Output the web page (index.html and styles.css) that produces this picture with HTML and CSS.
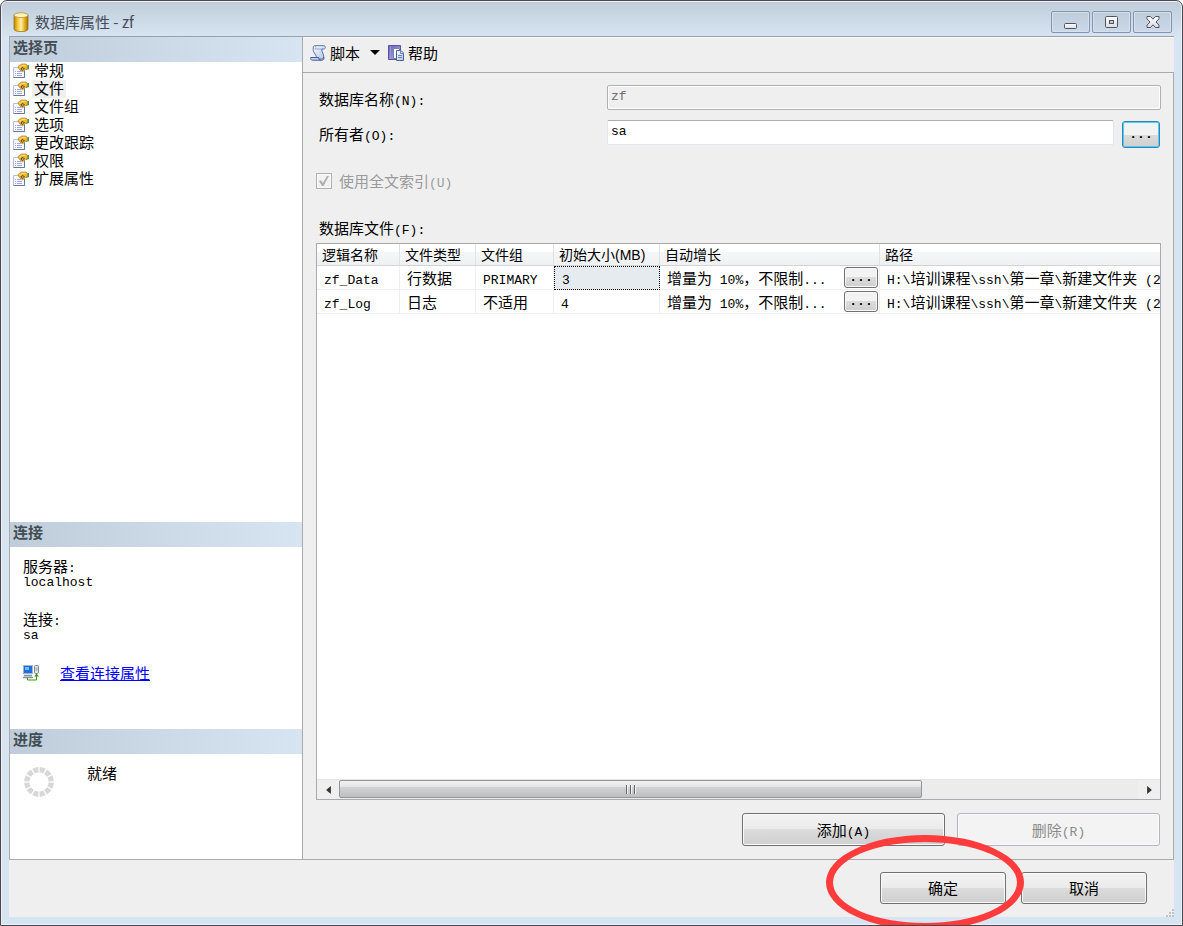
FILE: index.html
```html
<!DOCTYPE html>
<html lang="zh-CN">
<head>
<meta charset="utf-8">
<title>数据库属性 - zf</title>
<link rel="stylesheet" href="styles.css">
</head>
<body>
<svg class="defs" aria-hidden="true">
  <defs>
    <linearGradient id="gold" x1="0" x2="1" y1="0" y2="0"><stop offset="0" stop-color="#b98205"/><stop offset=".2" stop-color="#f0b825"/><stop offset=".5" stop-color="#fff3a8"/><stop offset=".75" stop-color="#eab01c"/><stop offset="1" stop-color="#a87404"/></linearGradient>
    <linearGradient id="paper" x1="0" x2="1" y1="0" y2="1"><stop offset="0" stop-color="#fff"/><stop offset="1" stop-color="#a9c0e6"/></linearGradient>
    <linearGradient id="book" x1="0" x2="1" y1="0" y2="1"><stop offset="0" stop-color="#6660b8"/><stop offset="1" stop-color="#b4b2e6"/></linearGradient>
    <linearGradient id="glyph" x1="0" x2="0" y1="0" y2="1"><stop offset="0" stop-color="#fff"/><stop offset="1" stop-color="#dcdcdc"/></linearGradient>
    <symbol id="page" viewBox="0 0 16 16">
      <path d="M.5 4.500h11v10H.5z" fill="#f7f9ff" stroke="#b4bedb"/>
      <path d="M.5 14.500h11v-7" fill="none" stroke="#66769c"/>
      <path d="M2 8.500h1M4 8.500h4M2 10.500h1M4 10.500h5M2 12.500h1M4 12.500h5" stroke="#a0a6e2"/>
      <path d="M13 2h3v4l-3 1z" fill="#3f9a3f"/>
      <path d="M5 3.500L8.500 1H13l1.500 1.500v3L12 6.500 9.500 9 7 7 5.500 5z" fill="#f2b830" stroke="#b98420" stroke-width=".7"/>
      <path d="M8.500 2.500h4M6.500 4h2" stroke="#ffe68a"/>
      <path d="M8 5l1.500-1L12 5.500 9.500 8 7.500 6z" fill="#6a4a14"/>
      <path d="M9 6h1.500" stroke="#fff0a0"/>
    </symbol>
  </defs>
</svg>
<div class="window">
  <header class="titlebar">
    <svg class="db-icon" viewBox="0 0 16 20" aria-hidden="true">
      <path d="M1 3v14c0 3.500 14 3.500 14 0V3z" fill="url(#gold)" stroke="#9a741c" stroke-width=".8"/>
      <ellipse cx="8" cy="3.200" rx="7" ry="2.400" fill="#fdf3bd" stroke="#b8922e" stroke-width=".8"/>
    </svg>
    <h1 class="title">数据库属性 - zf</h1>
    <div class="caption-buttons">
      <button class="caption" type="button" aria-label="最小化"><svg viewBox="0 0 16 14"><rect x="1.500" y="8.500" width="12" height="5" rx="1" fill="url(#glyph)" stroke="#4d5468"/></svg></button>
      <button class="caption" type="button" aria-label="最大化"><svg viewBox="0 0 16 14"><rect x="1.500" y="1.500" width="12" height="11" rx="1" fill="url(#glyph)" stroke="#4d5468"/><rect x="5.500" y="5.500" width="4" height="3" fill="#b8c8dc" stroke="#4d5468"/></svg></button>
      <button class="caption" type="button" aria-label="关闭"><svg viewBox="0 0 16 14"><path d="M2 1.500h3.500L8 4.200l2.500-2.700H14v2.300L11 7l3 3.200v2.300h-3.500L8 9.800l-2.500 2.700H2v-2.300L5 7 2 3.800z" fill="url(#glyph)" stroke="#4d5468" stroke-linejoin="round"/></svg></button>
    </div>
  </header>

  <div class="client">
    <div class="body">
      <aside class="sidebar">
        <section class="pages">
          <h2 class="panel-title">选择页</h2>
          <ul class="page-list">
            <li class="page-item"><svg class="icon" aria-hidden="true"><use href="#page"/></svg><span class="page-name">常规</span></li>
            <li class="page-item"><svg class="icon" aria-hidden="true"><use href="#page"/></svg><span class="page-name selected">文件</span></li>
            <li class="page-item"><svg class="icon" aria-hidden="true"><use href="#page"/></svg><span class="page-name">文件组</span></li>
            <li class="page-item"><svg class="icon" aria-hidden="true"><use href="#page"/></svg><span class="page-name">选项</span></li>
            <li class="page-item"><svg class="icon" aria-hidden="true"><use href="#page"/></svg><span class="page-name">更改跟踪</span></li>
            <li class="page-item"><svg class="icon" aria-hidden="true"><use href="#page"/></svg><span class="page-name">权限</span></li>
            <li class="page-item"><svg class="icon" aria-hidden="true"><use href="#page"/></svg><span class="page-name">扩展属性</span></li>
          </ul>
        </section>
        <section class="connection">
          <h2 class="panel-title">连接</h2>
          <dl class="facts">
            <dt>服务器<span class="lat">:</span></dt>
            <dd class="lat">localhost</dd>
            <dt>连接<span class="lat">:</span></dt>
            <dd class="lat">sa</dd>
          </dl>
          <div class="view-link">
            <svg class="icon" viewBox="0 0 16 16" aria-hidden="true">
              <rect x=".5" y=".5" width="9" height="8" fill="#1c6fe0" stroke="#a8b4c4"/>
              <path d="M2 2h4v3H2z" fill="#7ab8ff"/>
              <path d="M1 10.500h8M0 12.500h10" stroke="#8290a4" stroke-width="1.500"/>
              <rect x="11.500" y=".5" width="4" height="8" rx="1" fill="#e2e6ec" stroke="#7a8494"/>
              <path d="M12.500 3h2M12.500 5h2" stroke="#8a94a4"/>
              <path d="M4.500 13v2h9v-5" fill="none" stroke="#3c9a10"/>
              <path d="M11 11.500L13.500 8.500 16 11.500z" fill="#3c9a10"/>
            </svg>
            <a class="link" href="#">查看连接属性</a>
          </div>
        </section>
        <section class="progress">
          <h2 class="panel-title">进度</h2>
          <div class="status">
            <svg class="spinner" viewBox="0 0 30 30" aria-hidden="true"><circle cx="15" cy="15" r="12.200" fill="none" stroke="#d8d8d8" stroke-width="5.400" pathLength="120" stroke-dasharray="8 2" stroke-dashoffset="-1"/></svg>
            <span>就绪</span>
          </div>
        </section>
      </aside>

      <main class="content">
        <div class="toolbar">
          <button class="tool" type="button">
            <svg class="icon" viewBox="0 0 16 16" aria-hidden="true">
              <path d="M4.500.7h9.300c2 0 2 3.300 0 3.300h-2c-.5 3 2.200 5 2 8l-1 2H6c1.500-4-3-6-2.800-9.500C3.200 2 3.300 1 4.500.7z" fill="url(#paper)" stroke="#5870a4"/>
              <path d="M4.500.7c1.800.4 1.800 3 .3 3.300h7" fill="none" stroke="#93a8d0"/>
              <path d="M.8 12.500h8c-.5 1.800 1 2.800 2.500 2.700H2.500C.8 15.200.3 13.700.8 12.500z" fill="#c3d3f0" stroke="#445c94"/>
              <path d="M11.300 15.200c2.300 0 3.200-1 2.500-3.200" fill="none" stroke="#445c94"/>
            </svg>
            脚本
            <svg class="caret" viewBox="0 0 10 5" aria-hidden="true"><path d="M0 0h10L5 5z"/></svg>
          </button>
          <button class="tool" type="button">
            <svg class="icon" viewBox="0 0 16 16" aria-hidden="true">
              <path d="M.5.500h12v14H.5z" fill="url(#book)" stroke="#5652a0"/>
              <path d="M2.500 1v13" stroke="#9a98d8"/>
              <path d="M5.500 3.500h5l2 2v8h-7z" fill="#fff" stroke="#7482b0"/>
              <path d="M8.500 5.500h4.500l2.500 2.500v7.500h-7z" fill="url(#paper)" stroke="#48629a"/>
              <path d="M12.500 5.500V8.500h3M10 10.500h4M10 12.500h4" fill="none" stroke="#6a86bc"/>
            </svg>
            帮助
          </button>
        </div>

        <div class="sheet">
          <div class="field">
            <label for="dbname">数据库名称<span class="lat">(N):</span></label>
            <input class="text lat" id="dbname" type="text" value="zf" disabled>
          </div>
          <div class="field">
            <label for="owner">所有者<span class="lat">(O):</span></label>
            <input class="text lat" id="owner" type="text" value="sa">
            <button class="browse focused lat" type="button" aria-label="浏览所有者">...</button>
          </div>
          <div class="check">
            <input class="box" id="fulltext" type="checkbox" checked disabled>
            <label for="fulltext">使用全文索引<span class="lat">(U)</span></label>
          </div>
          <h3 class="grid-label">数据库文件<span class="lat">(F):</span></h3>

          <div class="grid">
            <div class="grid-view">
              <table class="files">
                <colgroup><col class="c-name"><col class="c-type"><col class="c-group"><col class="c-size"><col class="c-growth"><col></colgroup>
                <thead>
                  <tr><th>逻辑名称</th><th>文件类型</th><th>文件组</th><th>初始大小(MB)</th><th>自动增长</th><th>路径</th></tr>
                </thead>
                <tbody>
                  <tr>
                    <td><span class="lat">zf_Data</span></td><td>行数据</td><td><span class="lat">PRIMARY</span></td><td class="current"><span class="lat">3</span></td>
                    <td><div class="growth"><span>增量为<span class="lat"> 10%</span>，不限制<span class="lat">...</span></span><button class="browse lat" type="button" aria-label="更改 zf_Data 的自动增长">...</button></div></td>
                    <td><span class="lat">H:\</span>培训课程<span class="lat">\ssh\</span>第一章<span class="lat">\</span>新建文件夹<span class="lat"> (2</span></td>
                  </tr>
                  <tr>
                    <td><span class="lat">zf_Log</span></td><td>日志</td><td>不适用</td><td><span class="lat">4</span></td>
                    <td><div class="growth"><span>增量为<span class="lat"> 10%</span>，不限制<span class="lat">...</span></span><button class="browse lat" type="button" aria-label="更改 zf_Log 的自动增长">...</button></div></td>
                    <td><span class="lat">H:\</span>培训课程<span class="lat">\ssh\</span>第一章<span class="lat">\</span>新建文件夹<span class="lat"> (2</span></td>
                  </tr>
                </tbody>
              </table>
            </div>
            <div class="scrollbar">
              <button class="arrow" type="button" aria-label="向左滚动"><svg viewBox="0 0 6 10"><path d="M6 0v10L0 5z"/></svg></button>
              <div class="track"><div class="thumb"><svg class="grip" viewBox="0 0 11 9" aria-hidden="true"><path d="M1.500 0v9M5.500 0v9M9.500 0v9" stroke="#666"/><path d="M2.500 0v9M6.500 0v9M10.500 0v9" stroke="#f4f4f4"/></svg></div></div>
              <button class="arrow" type="button" aria-label="向右滚动"><svg viewBox="0 0 6 10"><path d="M0 0v10l6-5z"/></svg></button>
            </div>
          </div>

          <div class="grid-actions">
            <button class="push wide" type="button">添加<span class="lat">(A)</span></button>
            <button class="push wide" type="button" disabled>删除<span class="lat">(R)</span></button>
          </div>
        </div>
      </main>
    </div>

    <footer class="footer">
      <div class="marked">
        <button class="push" type="button">确定</button>
        <span class="ring"></span>
      </div>
      <button class="push" type="button">取消</button>
      <svg class="resize" viewBox="0 0 8 8" aria-hidden="true"><path d="M6 0h2v2H6zM3 3h2v2H3zM6 3h2v2H6zM0 6h2v2H0zM3 6h2v2H3zM6 6h2v2H6z" fill="#c0c4c8"/></svg>
    </footer>
  </div>
</div>
</body>
</html>
```

FILE: styles.css
```css
* { box-sizing: border-box; }

body {
  margin: 0;
  background: #fff;
  color: #000;
  font: 15px/18px "Noto Sans CJK SC", sans-serif;
}

button, input { font: inherit; color: inherit; }
h1, h2, h3, ul, dl, dd { margin: 0; padding: 0; }
h1, h2, h3 { font-size: 15px; font-weight: 400; }

.defs { position: absolute; width: 0; height: 0; }

.lat {
  font-family: "Liberation Mono", "Noto Sans CJK SC", monospace;
  font-size: 13px;
  line-height: 1;
  white-space: pre;
}

.icon { width: 16px; height: 16px; flex: none; }

.window {
  display: flex;
  flex-direction: column;
  min-height: 100vh;
  padding: 0 8px;
  border: 1px solid #4a4a4e;
  border-bottom-width: 1px;
  border-radius: 7px 7px 0 0;
  background: linear-gradient(#bfccda, #d7e4f2 36px);
  box-shadow: inset 0 0 0 1px #eaf1f8;
  overflow: hidden;
}

.titlebar {
  display: flex;
  align-items: center;
  gap: 6px;
  height: 35px;
  padding: 7px 2px 0 4px;
}
.db-icon { width: 16px; height: 20px; }
.title { flex: 1; color: #444c56; }
.caption-buttons { display: flex; gap: 2px; }
.caption {
  display: grid;
  place-items: center;
  width: 39px;
  height: 22px;
  padding: 0;
  border: 1px solid #8494b0;
  border-radius: 2px;
  background: linear-gradient(#bdcbdb, #ccd9e8);
  box-shadow: inset 0 0 0 1px #d5e0ec;
}
.caption svg { width: 16px; height: 14px; }

.client {
  flex: 1;
  display: flex;
  flex-direction: column;
  margin-bottom: 8px;
  border-top: 1px solid #9c9fa4;
  background: #efefef;
}
.body {
  flex: 1;
  display: flex;
  border-bottom: 1px solid #a9a9b0;
}

.sidebar {
  display: flex;
  flex-direction: column;
  width: 294px;
  flex: none;
  border: solid #a9a9b0;
  border-width: 0 1px;
  background: #fff;
}
.panel-title {
  height: 25px;
  padding: 1px 3px;
  background: linear-gradient(90deg, #bfccda, #d7e4f2);
  color: #434e54;
  font-weight: 700;
}
.pages { flex: 1; }
.connection { height: 207px; }
.progress { height: 130px; }
.page-list { list-style: none; }
.page-item {
  display: flex;
  align-items: center;
  gap: 3px;
  height: 18px;
  padding-left: 3px;
}
.page-name {
  padding: 0 2px 2px;
  line-height: 16px;
}
.selected { background: #efefef; }
.facts { padding: 11px 13px 0; line-height: 16px; }
.facts dd { margin-bottom: 20px; line-height: 16px; }
.view-link {
  display: flex;
  align-items: center;
  gap: 21px;
  padding: 0 13px;
}
.link { color: #00f; }
.status {
  display: flex;
  gap: 33px;
  padding: 10px 14px;
}
.spinner { width: 30px; height: 30px; margin-top: 3px; }

.content {
  flex: 1;
  min-width: 0;
  display: flex;
  flex-direction: column;
}
.toolbar {
  display: flex;
  align-items: center;
  gap: 8px;
  height: 36px;
  padding: 0 7px 5px;
  border-top: 1px solid #fafafa;
  border-bottom: 1px solid #a9a9b0;
}
.tool {
  display: flex;
  align-items: center;
  gap: 4px;
  padding: 0;
  border: 0;
  background: none;
}
.caret { width: 10px; height: 5px; margin-left: 6px; }

.sheet {
  flex: 1;
  display: flex;
  flex-direction: column;
  padding: 12px 12px 13px 13px;
  border-right: 1px solid #a9a9b0;
}
.field {
  display: flex;
  align-items: flex-start;
  height: 25px;
  margin-bottom: 10px;
}
.field label { width: 291px; padding: 5px 3px; flex: none; }
.text {
  flex: 1;
  min-width: 0;
  height: 25px;
  padding: 0 3px 2px;
  border: 1px solid #e2e6ee;
  border-top-color: #abadb3;
  border-radius: 2px;
  background: #fff;
}
.text:disabled {
  border-color: #afafaf;
  background: #efefef;
  box-shadow: inset 0 0 0 1px #fff;
  color: #6d6d6d;
}
.browse {
  width: 34px;
  height: 21px;
  flex: none;
  padding: 0;
  border: 1px solid #707070;
  border-radius: 3px;
  background: linear-gradient(#f2f2f2 0 50%, #dcdcdc 50%, #cfcfcf);
  box-shadow: inset 0 0 0 1px #fafafa;
  font-weight: 700;
}
.browse.focused {
  width: 38px;
  height: 27px;
  margin: 1px 1px 0 8px;
  border-color: #3c7fb1;
  box-shadow: inset 0 0 0 1px #48d0f8;
}

.check {
  display: flex;
  align-items: center;
  gap: 7px;
  height: 18px;
  margin-top: 17px;
  color: #9b9b9b;
}
.box {
  appearance: none;
  display: grid;
  place-items: center;
  width: 16px;
  height: 16px;
  margin: 0;
  border: 1px solid #b1b1b1;
  background: #f2f2f2;
  box-shadow: inset 0 0 0 1px #fafafa;
}
.box:checked::before {
  content: "";
  width: 10px;
  height: 10px;
  background: #b0b0b0;
  clip-path: polygon(0 50%, 20% 42%, 38% 70%, 80% 0, 100% 0, 45% 100%, 30% 100%);
}
.grid-label { margin-top: 29px; padding: 0 3px; height: 24px; }

.grid {
  flex: 1;
  display: flex;
  flex-direction: column;
  border: 1px solid #a9a9b0;
  background: #fff;
}
.grid-view { flex: 1; overflow: hidden; }
.files {
  width: 100%;
  table-layout: fixed;
  border-collapse: separate;
  border-spacing: 0;
}
.c-name { width: 83px; }
.c-type { width: 76px; }
.c-group { width: 78px; }
.c-size { width: 106px; }
.c-growth { width: 220px; }
.files th, .files td {
  overflow: hidden;
  padding: 0 7px;
  text-align: left;
  white-space: nowrap;
}
.files th {
  height: 22px;
  padding: 0 5px;
  border-right: 1px solid #e0e2e4;
  border-bottom: 1px solid #d0d2d5;
  background: linear-gradient(#fff 0 40%, #f5f6f8 40%, #f0f1f3);
  font: 14px/20px "Liberation Sans", "Noto Sans CJK SC", sans-serif;
}
.files td {
  height: 24px;
  border-right: 1px solid #efefef;
  border-bottom: 1px solid #efefef;
}
.files th:last-child, .files td:last-child { border-right: 0; }
.files .current {
  border: 1px dotted #000;
  background: #e6ebf0;
}
.growth {
  display: flex;
  align-items: center;
  justify-content: space-between;
  margin-right: -6px;
}

.scrollbar {
  display: flex;
  height: 20px;
  border-top: 1px solid #e4e4e4;
  background: #ececec;
}
.arrow {
  display: grid;
  place-items: center;
  width: 22px;
  padding: 0;
  border: 0;
  background: #efefef;
}
.arrow svg { width: 5px; height: 8px; fill: #333; }
.track { flex: 1; padding-bottom: 1px; }
.thumb {
  display: grid;
  place-items: center;
  width: 73%;
  height: 100%;
  border: 1px solid #959595;
  border-radius: 2px;
  background: linear-gradient(#f2f2f2, #e4e4e6 38%, #d2d3d5 38%, #bdbec0);
}
.grip { width: 11px; height: 9px; }

.grid-actions {
  display: flex;
  justify-content: flex-end;
  gap: 12px;
  margin-top: 13px;
  padding-right: 1px;
}
.push {
  width: 126px;
  height: 32px;
  padding: 0;
  border: 1px solid #707070;
  border-radius: 3px;
  background: linear-gradient(#f3f3f3, #ebebeb 50%, #dcdcdc 50%, #cfcfcf);
  box-shadow: inset 0 0 0 1px #fafafa;
}
.push.wide { width: 203px; height: 33px; }
.push:disabled {
  border-color: #b4b8bc;
  background: #f3f3f3;
  color: #8b8b8b;
}

.footer {
  position: relative;
  display: flex;
  justify-content: flex-end;
  gap: 15px;
  height: 57px;
  padding: 12px 27px 0;
}
.marked { position: relative; }
.ring {
  position: absolute;
  left: -54px;
  top: -37px;
  width: 198px;
  height: 95px;
  border: 7px solid #ff3b3b;
  border-radius: 50%;
  pointer-events: none;
}
.resize {
  position: absolute;
  right: 0;
  bottom: 0;
  width: 8px;
  height: 8px;
}
```
